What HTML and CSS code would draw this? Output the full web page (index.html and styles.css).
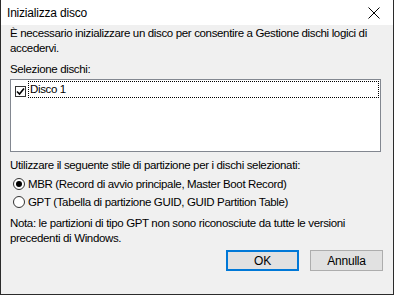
FILE: index.html
```html
<!DOCTYPE html>
<html lang="it">

<head>
    <meta charset="UTF-8">
    <title>Inizializza disco</title>
    <link rel="stylesheet" href="styles.css">
</head>

<body>
    <div class="dialog">
        <div class="titlebar">
            <span class="title">Inizializza disco</span>
            <button class="close-btn" aria-label="Chiudi">
                <svg width="12" height="12" viewBox="0 0 12 12">
                    <path d="M0.5 0.5 L11.5 11.5 M11.5 0.5 L0.5 11.5" stroke="#000" stroke-width="1" fill="none" />
                </svg>
            </button>
        </div>
        <div class="content">
            <p class="intro">È necessario inizializzare un disco per consentire a Gestione dischi logici di accedervi.</p>

            <div class="label">Selezione dischi:</div>
            <div class="listbox">
                <div class="list-item">
                    <span class="check">
                        <svg width="9" height="9" viewBox="0 0 9 9">
                            <path d="M1 4.5 L3.5 7 L8 1.5" stroke="#000" stroke-width="1.6" fill="none" />
                        </svg>
                    </span>
                    <span class="item-text">Disco 1</span>
                </div>
            </div>

            <div class="label style-label">Utilizzare il seguente stile di partizione per i dischi selezionati:</div>
            <div class="radios">
                <div class="radio-row">
                    <span class="radio checked"></span>
                    <span>MBR (Record di avvio principale, Master Boot Record)</span>
                </div>
                <div class="radio-row">
                    <span class="radio"></span>
                    <span>GPT (Tabella di partizione GUID, GUID Partition Table)</span>
                </div>
            </div>

            <p class="note">Nota: le partizioni di tipo GPT non sono riconosciute da tutte le versioni precedenti di Windows.</p>
        </div>
        <div class="buttons">
            <button class="btn default">OK</button>
            <button class="btn">Annulla</button>
        </div>
    </div>
</body>

</html>
```

FILE: styles.css
```css
* {
    box-sizing: border-box;
}

body {
    margin: 0;
    font-family: "Liberation Sans", Arial, sans-serif;
    font-size: 11.5px;
    letter-spacing: -0.35px;
    color: #000;
}

.dialog {
    width: 394px;
    height: 295px;
    background-color: #f0f0f0;
    border: 1px solid #2b2b2b;
    border-top: none;
    display: flex;
    flex-direction: column;
}

.titlebar {
    height: 25px;
    background-color: #fff;
    display: flex;
    align-items: center;
    justify-content: space-between;
    padding-left: 6px;
}

.title {
    font-size: 12px;
    letter-spacing: -0.2px;
}

.close-btn {
    width: 32px;
    height: 25px;
    border: none;
    background: none;
    padding: 0;
    margin-right: 3px;
    display: flex;
    align-items: center;
    justify-content: center;
}

.content {
    padding: 1px 12px 0 9px;
    line-height: 15px;
}

.intro {
    margin: 0;
    padding-right: 10px;
}

.label {
    margin-top: 6px;
    height: 15px;
}

.listbox {
    margin-top: 2px;
    height: 73px;
    background-color: #fff;
    border: 1px solid #828790;
    padding: 1px;
}

.list-item {
    height: 17px;
    display: flex;
    align-items: center;
}

.check {
    width: 11px;
    height: 11px;
    border: 1px solid #333;
    background-color: #fff;
    margin-left: 3px;
    margin-top: 4px;
    display: flex;
    align-items: center;
    justify-content: center;
}

.item-text {
    flex: 1;
    height: 17px;
    margin-left: 2px;
    padding-left: 1px;
    border: 1px dotted #000;
    line-height: 15px;
}

.style-label {
    margin-top: 6px;
}

.radios {
    margin-top: 2px;
}

.radio-row {
    height: 18px;
    display: flex;
    align-items: center;
    gap: 3px;
    padding-left: 3px;
}

.radio {
    width: 12px;
    height: 12px;
    border: 1px solid #333;
    border-radius: 50%;
    background-color: #fff;
    display: flex;
    align-items: center;
    justify-content: center;
}

.radio.checked::after {
    content: "";
    width: 6px;
    height: 6px;
    border-radius: 50%;
    background-color: #000;
}

.note {
    margin: 5px 0 0;
}

.buttons {
    margin-top: auto;
    display: flex;
    justify-content: flex-end;
    gap: 11px;
    padding: 0 10px 23px 0;
}

.btn {
    width: 73px;
    height: 21px;
    font-family: "Liberation Sans", Arial, sans-serif;
    font-size: 12px;
    letter-spacing: -0.2px;
    background-color: #e1e1e1;
    border: 1px solid #adadad;
    padding: 0;
    color: #000;
}

.btn.default {
    border: 2px solid #0078d7;
}
```
